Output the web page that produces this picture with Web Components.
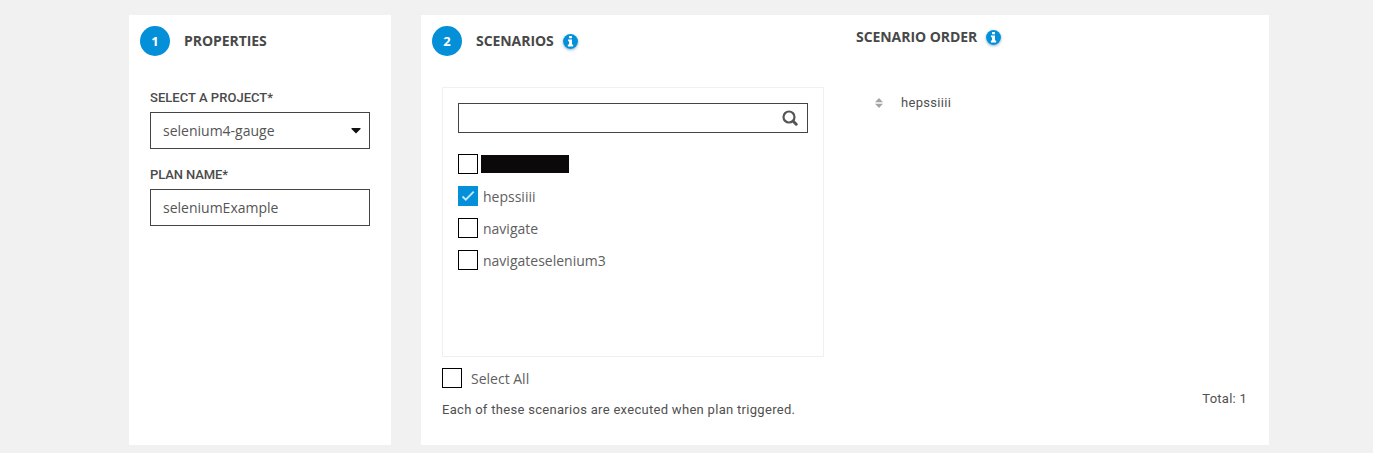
<!DOCTYPE html>
<html lang="en">
<head>
<meta charset="utf-8">
<title>Plan</title>
<style>
html,body{margin:0;background:#f1f1f1;overflow:hidden}
body{font-family:"Open Sans",sans-serif;color:#4a4a4a}
</style>
</head>
<body>
<plan-page></plan-page>
<script>
const define = (name, html, setup) => customElements.define(name, class extends HTMLElement {
  constructor() {
    super();
    const t = document.createElement('template');
    t.innerHTML = html;
    this.attachShadow({ mode: 'open' }).append(t.content.cloneNode(true));
  }
  connectedCallback() { if (setup) setup(this, this.shadowRoot); }
});

define('info-icon', `<style>
:host{display:block;width:15px;height:15px;border-radius:50%;box-shadow:0 1px 3px rgba(0,60,110,.4)}
svg{display:block}</style>
<svg width="15" height="15" viewBox="0 0 16 16"><circle cx="8" cy="8" r="8" fill="#0390d8"/>
<path fill="#fff" d="M6.500 2.200h3v2.400H6.500zM5.300 5.900h4.300v5.300h1.200v2H5.200v-2h1.300V7.800H5.300z"/></svg>`);

define('step-heading', `<style>
:host{display:flex;align-items:center;height:30px;font:700 14px/30px "Open Sans",sans-serif;color:#484848}
.n{width:30px;height:30px;border-radius:50%;background:#0390d8;color:#fff;text-align:center;margin-right:14px;font-size:13px}
:host(:not([n])) .n{display:none}
.t{letter-spacing:-.06px;white-space:nowrap}
info-icon{margin-left:9px}:host(:not([info])) info-icon{display:none}
</style><span class="n"></span><span class="t"><slot></slot></span><info-icon></info-icon>`,
(h, r) => { r.querySelector('.n').textContent = h.getAttribute('n') || ''; });

define('form-field', `<style>
:host{display:block}
.l{display:block;height:20px;font:500 13px/22px Roboto,sans-serif;color:#4a4a4a;letter-spacing:var(--ls,0);white-space:nowrap}
.b{box-sizing:border-box;display:flex;justify-content:space-between;align-items:center;height:37px;border:1px solid #444;margin-top:5px;padding:0 8px 0 12px;font:14px "Open Sans",sans-serif;color:#555}
svg{display:none}:host([select]) svg{display:block}
</style><span class="l"></span><div class="b"><slot></slot><svg width="10" height="6" viewBox="0 0 10 6"><path d="M.5 0h9v1L5 5.500.5 1z" fill="#111"/></svg></div>`,
(h, r) => { r.querySelector('.l').textContent = h.getAttribute('label'); });

define('check-row', `<style>
:host{display:flex;align-items:center;height:20px;gap:var(--gap,5px);font:14px/20px "Open Sans",sans-serif;color:#606060}
.c{box-sizing:border-box;width:20px;height:20px;border:1px solid #000;background:#fff;flex:none}
svg{display:none}
:host([checked]) .c{background:#0390d8;border-color:#0390d8}
:host([checked]) svg{display:block}
.t{white-space:nowrap;padding-top:2px}
</style><span class="c"><svg width="18" height="18" viewBox="0 0 18 18"><path d="M3.500 9.500l3.300 3.200 7.900-8" fill="none" stroke="#c4e8fb" stroke-width="1.900"/></svg></span><span class="t"><slot></slot></span>`);

define('search-box', `<style>
:host{box-sizing:border-box;display:flex;justify-content:flex-end;align-items:center;height:30px;border:1px solid #444;padding:0 9px 0 0}
</style><svg width="16" height="16" viewBox="0 0 16 16" fill="none" stroke="#555"><circle cx="7" cy="7" r="5.500" stroke-width="2.200"/><path d="M11.200 11.200l3 3" stroke-width="3" stroke-linecap="round"/></svg>`);

define('order-row', `<style>
:host{display:flex;align-items:center;height:20px;gap:18px;font:13px/20px Roboto,sans-serif;color:#505050;letter-spacing:.3px}
svg{display:block}
</style><svg width="8" height="10" viewBox="0 0 8 10"><path d="M0 4.200L4 0l4 4.200zM0 5.800h8L4 10z" fill="#a4a4a4"/></svg><slot></slot>`);

define('ui-panel', `<style>:host{display:block;box-sizing:border-box;background:#fff;height:430px}</style><slot></slot>`);

define('plan-page', `<style>
:host{display:flex;gap:30px;padding:15px 0 8px 129px}
.p{width:262px;padding:11px 21px 0 11px}
.f{padding:31px 0 0 10px}
.f form-field + form-field{margin-top:15px}
.s{width:848px}
.g{display:grid;grid-template-columns:435px 413px;height:430px}
.left{padding:11px 0 0 11px}
.in{margin-left:10px;width:382px}
.list{box-sizing:border-box;height:270px;border:1px solid #f0f0f0;margin-top:31px;padding:15px}
.rows{display:flex;flex-direction:column;gap:12px;margin-top:21px}
.red{display:block;width:88px;height:18px;background:#0b0909;margin:-2px 0 0 -2px}
.all{margin-top:11px;--gap:9px}
.note{font:13px/20px Roboto,sans-serif;color:#505050;margin-top:12px;white-space:nowrap;letter-spacing:.3px}
.right{display:flex;flex-direction:column;padding-top:7px}
.right order-row{margin:41px 0 0 19px}
.total{margin:auto 22px 36px auto;font:13px/20px Roboto,sans-serif;color:#505050;letter-spacing:.25px}
</style>
<ui-panel class="p"><step-heading n="1">PROPERTIES</step-heading>
<div class="f"><form-field select label="SELECT A PROJECT*" style="--ls:.03px">selenium4-gauge</form-field><form-field label="PLAN NAME*" style="--ls:-.1px">seleniumExample</form-field></div></ui-panel>
<ui-panel class="s"><div class="g">
<div class="left"><step-heading n="2" info>SCENARIOS</step-heading>
<div class="in"><div class="list"><search-box></search-box><div class="rows">
<check-row><span class="red"></span></check-row><check-row checked>hepssiiii</check-row><check-row>navigate</check-row><check-row>navigateselenium3</check-row></div></div>
<check-row class="all">Select All</check-row>
<div class="note">Each of these scenarios are executed when plan triggered.</div></div></div>
<div class="right"><step-heading info>SCENARIO ORDER</step-heading><order-row>hepssiiii</order-row><div class="total">Total: 1</div></div>
</div></ui-panel>`);
</script>
</body>
</html>
